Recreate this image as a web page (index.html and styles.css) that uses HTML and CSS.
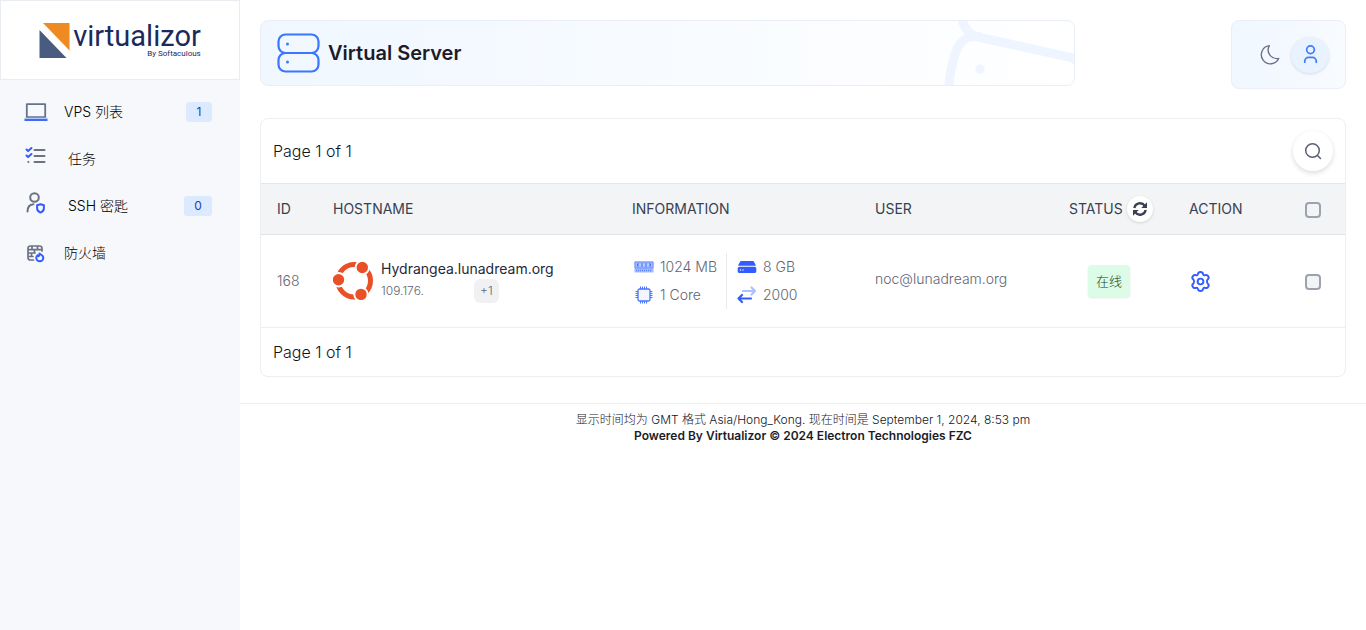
FILE: index.html
```html
<!DOCTYPE html>
<html lang="zh">
<head>
<meta charset="utf-8">
<meta name="viewport" content="width=device-width, initial-scale=1">
<title>Virtual Server</title>
<link rel="stylesheet" href="styles.css">
</head>
<body>
<aside class="sidebar">
  <a class="logo" href="#">
    <svg class="logo-mark" viewBox="0 0 30 35" aria-hidden="true"><path fill="#ef8a23" d="M3.5 0H30v27.5z"/><path fill="#4a5b80" d="M0 7v28h27z"/></svg>
    <span class="logo-words"><span class="logo-name">virtualizor</span><span class="logo-by">By Softaculous</span></span>
  </a>
  <nav class="nav">
    <a class="nav-item" href="#">
      <svg class="nav-icon" viewBox="0 0 24 24" aria-hidden="true"><path d="M2.8 4.2h18.4v13H2.8z" fill="none" stroke="#64748b" stroke-width="1.8" stroke-linejoin="round"/><path d="M.5 19.8h23" stroke="#4069f6" stroke-width="2.4"/><path d="M.5 18.2h23" stroke="#b5c8fc" stroke-width="1"/></svg>
      <span>VPS 列表</span><span class="count">1</span>
    </a>
    <a class="nav-item indent" href="#">
      <svg class="nav-icon" viewBox="0 0 24 24" fill="none" stroke-width="2" stroke-linecap="round" stroke-linejoin="round" aria-hidden="true"><path stroke="#6b7280" d="M10.500 6h10M10.500 12h10M10.500 18h10M4.300 18h.1"/><path stroke="#335cff" d="m2.500 5.500 1.600 1.600L7.500 4M2.500 11.500l1.600 1.600L7.500 10"/></svg>
      <span>任务</span>
    </a>
    <a class="nav-item indent" href="#">
      <svg class="nav-icon" viewBox="0 0 24 24" fill="none" stroke-width="2" stroke-linecap="round" stroke-linejoin="round" aria-hidden="true"><circle cx="10.500" cy="6.500" r="4.300" stroke="#6b7280"/><path stroke="#6b7280" d="M3.500 20.500c0-4.500 2.500-7 6-7.300"/><path stroke="#335cff" d="M16.500 13.200l3.400 1v3c0 2.300-1.500 3.600-3.400 4.400-1.900-.8-3.400-2.100-3.400-4.400v-3z"/></svg>
      <span>SSH 密匙</span><span class="count wide">0</span>
    </a>
    <a class="nav-item" href="#">
      <svg class="nav-icon" viewBox="0 0 24 24" fill="none" stroke-width="1.700" stroke-linecap="round" stroke-linejoin="round" aria-hidden="true"><path stroke="#6b7280" d="M9.500 19H6.200A2.200 2.200 0 0 1 4 16.800V7.200A2.200 2.200 0 0 1 6.200 5h9.600A2.200 2.200 0 0 1 18 7.200V10M4 8.700h14M4 12h7M4 15.500h5M8 5v3.500M13.500 5v3.500M10.500 8.700V12M7.500 12v3.500"/><path stroke="#335cff" stroke-width="2" d="M15.500 12.500c1.800 1 3.800 2.300 3.800 4.300a3.500 3.500 0 0 1-7 0c0-1.200.6-2 1.300-2.600l1 1c.7-.6 1-1.500.9-2.700z"/></svg>
      <span>防火墙</span>
    </a>
  </nav>
</aside>
<div class="page">
  <header class="top">
    <div class="banner">
      <svg class="banner-icon" viewBox="0 0 44 40" fill="none" stroke="#3b76ff" stroke-width="2.200" aria-hidden="true"><rect x="2.500" y="1.500" width="40" height="18.500" rx="7"/><rect x="2.500" y="20" width="40" height="18.500" rx="7"/><g fill="#3b76ff" stroke="none"><circle cx="11.500" cy="11" r="1.500"/><circle cx="11.500" cy="29" r="1.500"/></g></svg>
      <h1>Virtual Server</h1>
      <svg class="banner-art" viewBox="0 0 145 64" fill="none" stroke="#eff5ff" stroke-width="9" aria-hidden="true"><path d="M33-3c2 11 7 17 16 19l91 20c7 2 10 5 12 10"/><path d="M20.500 67c-1-5 0-11 2-20l3-12c4-15 12-21 26-19.500"/><circle cx="51" cy="48.300" r="4.700" fill="#eff5ff" stroke="none"/></svg>
    </div>
    <div class="tools">
      <button class="plain" type="button" aria-label="Theme"><svg class="tool-icon" viewBox="0 0 24 24" fill="none" stroke="#6b6f87" stroke-width="1.400" stroke-linejoin="round" aria-hidden="true"><path d="M11.800 2.800A9.500 9.500 0 1 0 21.700 16C14 17.500 8 10 11.800 2.800z"/></svg></button>
      <button class="avatar" type="button" aria-label="Account"><svg class="tool-icon" viewBox="0 0 24 24" fill="none" stroke="#407bff" stroke-width="1.800" stroke-linecap="round" aria-hidden="true"><circle cx="12" cy="7" r="4"/><path d="M6 20v-1a4 4 0 0 1 4-4h4a4 4 0 0 1 4 4v1"/></svg></button>
    </div>
  </header>
  <main class="card">
    <div class="card-head">
      <span>Page 1 of 1</span>
      <button class="search" type="button" aria-label="Search"><svg class="search-icon" viewBox="0 0 20 20" fill="none" stroke="#5b5f76" stroke-width="1.500" stroke-linecap="round" aria-hidden="true"><circle cx="9.500" cy="9.500" r="6.800"/><path d="m14.500 14.500 3 3"/></svg></button>
    </div>
    <table class="vps">
      <colgroup><col class="c-id"><col class="c-host"><col class="c-info"><col class="c-user"><col class="c-status"><col class="c-action"><col class="c-check"></colgroup>
      <thead>
        <tr>
          <th>ID</th><th>HOSTNAME</th><th>INFORMATION</th><th>USER</th>
          <th><span class="status-head">STATUS<button class="refresh" type="button" aria-label="Refresh"><svg class="refresh-icon" viewBox="0 0 16 16" fill="none" stroke="#374151" stroke-width="2.300" aria-hidden="true"><path d="M2.300 7A5.800 5.800 0 0 1 12.800 4.800M13.700 9A5.800 5.800 0 0 1 3.200 11.200"/><path fill="#374151" stroke="none" d="M15 1.300v5.700H9.300zM1 14.700V9h5.700z"/></svg></button></span></th>
          <th>ACTION</th><th class="check"><input type="checkbox" aria-label="Select all"></th>
        </tr>
      </thead>
      <tbody>
        <tr>
          <td>168</td>
          <td>
            <div class="host">
              <svg class="os" viewBox="0 0 40 40" aria-label="Ubuntu"><circle cx="21.200" cy="19.700" r="16.300" fill="none" stroke="#e95028" stroke-width="5"/><g fill="#e95028" stroke="#fff" stroke-width="2"><circle cx="5.500" cy="18.700" r="6.700"/><circle cx="29.300" cy="6.500" r="6.700"/><circle cx="28" cy="33.400" r="6.700"/></g></svg>
              <div class="host-text"><a class="host-name" href="#">Hydrangea.lunadream.org</a><div class="ip"><span>109.176.</span><span class="more">+1</span></div></div>
            </div>
          </td>
          <td>
            <div class="specs">
              <ul class="spec-list divided">
                <li><svg class="spec-icon" viewBox="0 0 20 20" aria-hidden="true"><path fill="#a5bcff" d="M.5 4.500h19v11H.5z"/><path fill="none" stroke="#6b8fff" d="M1 5h18v6H1z"/><path stroke="#4f76fa" stroke-width="3" stroke-dasharray="2 2" d="M3 8h15"/><path stroke="#fff" stroke-width="1" stroke-dasharray="1 1" d="M4.500 8h12"/><path stroke="#5c82fb" stroke-width="1.500" stroke-dasharray="1 1" d="M2 13.500h16"/></svg>1024 MB</li>
                <li><svg class="spec-icon" viewBox="0 0 20 20" fill="none" stroke="#4a75ff" aria-hidden="true"><rect x="4" y="4" width="12" height="12" rx="1.500" fill="#f3f6ff" stroke-width="1.300"/><path stroke-width="1" d="M6.500 1.500V4M8.500 1.500V4M10.500 1.500V4M12.500 1.500V4M6.500 16v2.500M8.500 16v2.500M10.500 16v2.500M12.500 16v2.500M1.500 6.500H4M1.500 8.500H4M1.500 10.500H4M1.500 12.500H4M16 6.500h2.500M16 8.500h2.500M16 10.500h2.500M16 12.500h2.500"/></svg>1 Core</li>
              </ul>
              <ul class="spec-list">
                <li><svg class="spec-icon" viewBox="0 0 20 20" aria-hidden="true"><path fill="#335cff" d="M4.500 4h11c.8 0 1.200.3 1.600 1l1.900 3.800H1L2.900 5c.4-.7.800-1 1.600-1z"/><path fill="#335cff" d="M2.500 9.800h15c1 0 1.800.8 1.800 1.800v2.600c0 1-.8 1.800-1.800 1.800h-15c-1 0-1.800-.8-1.800-1.800v-2.600c0-1 .8-1.800 1.800-1.800z"/><circle cx="3.500" cy="13" r=".7" fill="#fff"/><circle cx="6" cy="13" r=".7" fill="#fff"/></svg>8 GB</li>
                <li><svg class="spec-icon" viewBox="0 0 20 20" fill="none" stroke-width="2.200" stroke-linecap="round" stroke-linejoin="round" aria-hidden="true"><path stroke="#abc0ff" d="M6 6h12M14.500 2.500 18 6l-3.500 3.500"/><path stroke="#335cff" d="M14 13.500H1.500M5 10l-3.500 3.500L5 17"/></svg>2000</li>
              </ul>
            </div>
          </td>
          <td class="user">noc@lunadream.org</td>
          <td class="status"><span class="online">在线</span></td>
          <td class="action"><button class="plain" type="button" aria-label="Manage"><svg class="gear" viewBox="0 0 24 24" fill="none" stroke="#335cff" stroke-width="2" stroke-linejoin="round" aria-hidden="true"><path d="M9.300 4.300c.4-3 5-3 5.400 0 .2 1 1.200 1.500 2.100 1.100 2.800-1.100 5.100 2.800 2.700 4.600-1 .8-1 3.200 0 4 2.400 1.800.1 5.700-2.700 4.600-.9-.4-1.900.1-2.100 1.100-.4 3-5 3-5.400 0-.2-1-1.200-1.500-2.100-1.100-2.800 1.100-5.100-2.800-2.700-4.600 1-.8 1-3.200 0-4-2.400-1.800-.1-5.700 2.700-4.600.9.400 1.900-.1 2.100-1.100z"/><circle cx="12" cy="12" r="3"/></svg></button></td>
          <td class="check"><input type="checkbox" aria-label="Select 168"></td>
        </tr>
      </tbody>
    </table>
    <div class="card-foot">Page 1 of 1</div>
  </main>
  <footer class="footer">
    <div>显示时间均为 GMT 格式 Asia/Hong_Kong. 现在时间是 September 1, 2024, 8:53 pm</div>
    <div class="powered">Powered By Virtualizor © 2024 Electron Technologies FZC</div>
  </footer>
</div>
</body>
</html>
```
FILE: styles.css
```css
*, *::before, *::after { box-sizing: border-box; }
body {
  margin: 0;
  min-height: 100vh;
  display: flex;
  font: 300 14px/20px Inter, "Noto Sans CJK SC", sans-serif;
  color: #14141f;
  background: #fff;
}
a { color: inherit; text-decoration: none; }
svg { display: block; flex: none; }
button { font: inherit; border: 0; padding: 0; background: none; cursor: pointer; }

.sidebar { width: 240px; flex: none; background: #f6f8fc; }
.logo {
  display: flex;
  justify-content: center;
  align-items: center;
  gap: 3px;
  height: 80px;
  background: #fff;
  border: 1px solid #e9ecf1;
}
.logo-mark { width: 31px; height: 35px; }
.logo-words { display: flex; flex-direction: column; align-items: flex-end; font-family: Roboto, sans-serif; font-weight: 400; color: #1a2a5c; }
.logo-name { font-size: 29px; line-height: 28px; }
.logo-by { font-size: 8px; line-height: 8px; }
.nav { padding: 8px 28px 0 24px; }
.nav-item { display: flex; align-items: center; gap: 16px; height: 47px; color: #000; }
.nav-item.indent { gap: 20px; }
.nav-icon { width: 24px; height: 24px; }
.indent .nav-icon { margin-bottom: 5px; }
.count {
  margin-left: auto;
  width: 26px;
  border-radius: 3px;
  background: #dbeafe;
  color: #1e40af;
  font-size: 12px;
  font-weight: 400;
  text-align: center;
}
.count.wide { width: 28px; }

.page { flex: 1; min-width: 0; }
.top { display: flex; justify-content: space-between; align-items: flex-start; padding: 20px 20px 0; }
.banner {
  position: relative;
  display: flex;
  align-items: center;
  gap: 8px;
  width: 75%;
  height: 66px;
  padding: 0 15px;
  overflow: hidden;
  border: 1px solid #eaeff7;
  border-radius: 8px;
  background: linear-gradient(90deg, #f0f7ff, #fff);
}
.banner-icon { width: 44px; height: 40px; }
.banner-art { position: absolute; right: 0; top: 0; width: 145px; height: 64px; }
h1 { margin: 0; font-size: 20px; line-height: 28px; font-weight: 600; color: #1c1c28; }
.tools {
  display: flex;
  align-items: center;
  gap: 10px;
  height: 69px;
  padding: 0 16px 0 26px;
  border: 1px solid #eaeff7;
  border-radius: 8px;
  background: linear-gradient(90deg, #f0f7ff, #f8fbff);
}
.tool-icon { width: 23px; height: 23px; }
.avatar {
  display: grid;
  place-items: center;
  width: 38px;
  height: 36px;
  border-radius: 50%;
  background: #e9f2ff;
  box-shadow: 0 1px 3px #00000020;
}

.card { margin: 29px 20px 26px; border: 1px solid #eceef2; border-radius: 8px; }
.card-head { display: flex; justify-content: space-between; align-items: center; height: 64px; padding: 0 12px; font-size: 16px; }
.search {
  display: grid;
  place-items: center;
  width: 40px;
  height: 40px;
  border-radius: 50%;
  background: #fff;
  box-shadow: 0 2px 5px #00000024;
}
.search-icon { width: 20px; height: 20px; }
.vps { width: 100%; table-layout: fixed; border-collapse: collapse; text-align: left; color: #5f6673; }
.c-id { width: 56px; }
.c-host { width: 299px; }
.c-info { width: 243px; }
.c-status { width: 120px; }
.c-action { width: 108px; }
.c-check { width: 64px; }
th, td { padding: 0 16px; vertical-align: middle; }
th { height: 51px; border-top: 1px solid #e5e7eb; border-bottom: 1px solid #e0e3ea; background: #f3f4f6; color: #374151; font-weight: 400; }
td { height: 93px; border-bottom: 1px solid #eceef2; }
.status-head { display: flex; align-items: center; gap: 4px; }
.refresh { display: grid; place-items: center; width: 26px; height: 26px; border-radius: 50%; background: #fff; box-shadow: 0 1px 3px #00000024; }
.refresh-icon { width: 16px; height: 16px; }
.check { text-align: center; }
.check input {
  appearance: none;
  display: block;
  width: 16px;
  height: 16px;
  margin: 2px auto 0;
  border: 2px solid #9ca3af;
  border-radius: 4px;
  background: #f3f4f6;
}
.host { display: flex; align-items: center; gap: 8px; }
.os { width: 40px; height: 40px; }
.host-name { display: block; font-weight: 400; color: #1f2937; }
.ip { display: flex; align-items: center; gap: 50px; font-size: 12px; line-height: 24px; }
.more { width: 25px; border-radius: 6px; background: #f0f1f3; text-align: center; }
.specs { display: flex; }
.spec-list { list-style: none; margin: 0; padding: 0 10px; }
.spec-list.divided { padding: 0 9px 0 2px; border-right: 1px solid #e8eaee; }
.spec-list li { display: flex; align-items: center; gap: 6px; height: 28px; }
.spec-icon { width: 20px; height: 20px; }
.user { padding-bottom: 4px; }
.status { padding-right: 24px; text-align: center; }
.online {
  display: inline-block;
  padding: 6px 8px;
  border-radius: 4px;
  background: #dcfce7;
  color: #0f3f20;
  font-size: 13px;
  box-shadow: 0 1px 2px #0000001a;
}
.action button { display: block; }
.gear { width: 23px; height: 23px; }
.card-foot { padding: 14px 12px; font-size: 16px; }
.footer { padding: 8px 0; border-top: 1px solid #eceef2; text-align: center; font-size: 12px; line-height: 16px; }
.powered { font-weight: 600; color: #1c1c28; }
```
